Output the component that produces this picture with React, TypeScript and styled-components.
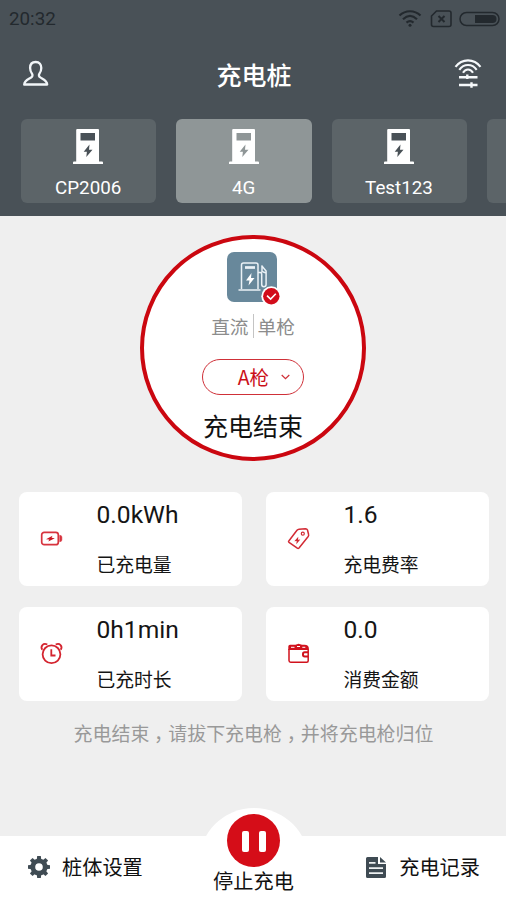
import { Fragment } from "react";
import styled, { createGlobalStyle } from "styled-components";

const GlobalStyle = createGlobalStyle`
* {
  box-sizing: border-box;
}
body {
  margin: 0;
  background-color: #efefef;
  font-family: Roboto, "Noto Sans CJK SC", sans-serif;
}
`;

const Screen = styled.div`
  display: flex;
  flex-direction: column;
  width: 506px;
  height: 900px;
  overflow: hidden;
  background-color: #efefef;
`;

const Header = styled.header`
  height: 216px;
  flex-shrink: 0;
  background-color: #495157;
  color: white;
`;

const StatusBar = styled.div`
  display: flex;
  justify-content: space-between;
  align-items: center;
  height: 36px;
  padding: 1px 6px 0 9px;
  font-size: 18.8px;
  color: #23292e;
  svg {
    display: block;
  }
`;

const TitleBar = styled.div`
  display: flex;
  justify-content: space-between;
  align-items: center;
  height: 76px;
  padding: 0 24px 0 22px;
  svg {
    display: block;
  }
`;

const Title = styled.h1`
  margin: 0;
  padding: 5px 0 0 4px;
  font-size: 25px;
  line-height: 36px;
  font-weight: 500;
`;

const Piles = styled.div`
  display: flex;
  gap: 20px;
  padding: 7px 0 0 21px;
  overflow: hidden;
`;

const Pile = styled.div<{ $active?: boolean }>`
  display: flex;
  flex-direction: column;
  align-items: center;
  flex: 0 0 135.4px;
  height: 84px;
  padding-top: 10px;
  border-radius: 6px;
  background-color: ${(p) => (p.$active ? "#8f9697" : "#5c6468")};
  color: ${(p) => (p.$active ? "#8f9697" : "#495157")};
  svg {
    margin-right: 1px;
  }
`;

const PileName = styled.span`
  margin-top: 12px;
  padding-right: 1px;
  font-size: 18.8px;
  line-height: 25px;
  color: white;
`;

const Main = styled.main`
  flex: 1;
  display: flex;
  flex-direction: column;
  align-items: center;
  padding-top: 19px;
`;

const Dial = styled.section`
  display: flex;
  flex-direction: column;
  align-items: center;
  width: 226px;
  height: 226px;
  padding-top: 13px;
  border: 4px solid #cb0710;
  border-radius: 50%;
  background-color: white;
  > svg {
    margin-right: 2px;
    flex-shrink: 0;
  }
`;

const GunType = styled.div`
  display: flex;
  align-items: center;
  height: 28px;
  margin-top: 7px;
  padding-top: 1px;
  font-size: 18.7px;
  line-height: 26px;
  color: #8c8c8c;
`;

const Divider = styled.i`
  width: 1px;
  height: 24px;
  margin: 0 4px 3px;
  background-color: #c4c4c4;
`;

const GunSelect = styled.button`
  display: flex;
  align-items: center;
  justify-content: flex-end;
  gap: 12px;
  width: 102px;
  height: 36px;
  flex-shrink: 0;
  margin-top: 18px;
  padding: 0 13px 0 0;
  border: 1.5px solid #cf3038;
  border-radius: 18px;
  background: white;
  font-family: "Noto Sans CJK SC", sans-serif;
  font-size: 19.5px;
  line-height: 30px;
  font-weight: 400;
  color: #cb1019;
`;

const DialState = styled.strong`
  margin-top: 14px;
  font-size: 25px;
  line-height: 38px;
  font-weight: 400;
  color: #111;
`;

const Stats = styled.section`
  display: grid;
  grid-template-columns: 223px 223px;
  grid-auto-rows: 94px;
  gap: 21px 24px;
  margin: 31px 0 0 1px;
`;

const Stat = styled.div`
  display: flex;
  border-radius: 8px;
  background-color: white;
  svg {
    display: block;
    margin: 34px 33px 0 20px;
    flex-shrink: 0;
  }
`;

const StatText = styled.div`
  display: flex;
  flex-direction: column;
  color: #151515;
`;

const StatValue = styled.span`
  margin-top: 7px;
  font-size: 24.6px;
  line-height: 32px;
`;

const StatLabel = styled.span`
  margin-top: 21px;
  font-size: 18.8px;
  line-height: 29px;
`;

const Hint = styled.p`
  margin: 20px 0 0 1px;
  font-size: 18.95px;
  line-height: 28px;
  color: #999;
  white-space: nowrap;
`;

// half-width comma centred in a full-width cell
const Comma = styled.span`
  padding: 0 0.25em;
  font-family: "Noto Sans CJK SC", sans-serif;
  font-feature-settings: "halt";
  line-height: 1;
`;

const Footer = styled.footer`
  position: relative;
  display: flex;
  justify-content: space-between;
  align-items: center;
  flex-shrink: 0;
  height: 64px;
  padding: 0 26px 0 27px;
  background-color: white;
`;

const FooterItem = styled.div`
  display: flex;
  align-items: center;
  gap: 11px;
  font-size: 20.2px;
  line-height: 30px;
  color: #111;
  svg {
    display: block;
    margin-bottom: 2px;
  }
`;

const Stop = styled.div`
  position: absolute;
  left: 50%;
  top: -28px;
  display: flex;
  flex-direction: column;
  align-items: center;
  width: 110px;
  height: 92px;
  padding-top: 6px;
  margin-left: -54.5px;
  border-radius: 55px 55px 0 0;
  background-color: white;
  font-size: 20.2px;
  line-height: 30px;
  color: #111;
`;

const StopButton = styled.button`
  display: flex;
  justify-content: center;
  align-items: center;
  gap: 10px;
  width: 53px;
  height: 53px;
  padding: 2px 0 0;
  border: none;
  border-radius: 50%;
  background-color: #d50d18;
`;

const PauseBar = styled.i`
  width: 7px;
  height: 21px;
  border-radius: 2px;
  background-color: white;
`;

const StatusIcons = () => (
  <svg width="102" height="20" viewBox="0 0 102 20" fill="none" stroke="#23292e">
    <path d="M1.5 6.5C7.5.8 16.5.8 22.5 6.5" strokeWidth="2.2" />
    <path d="M5 10.2C9.5 6 14.5 6 19 10.2" strokeWidth="2.2" />
    <path d="M8.5 13.6C10.8 11.6 13.2 11.6 15.5 13.6" strokeWidth="2.2" />
    <circle cx="12" cy="16.2" r="1.5" fill="#23292e" stroke="none" />
    <path d="M38.5 2H51q2 0 2 2v11.500q0 2-2 2H35.500q-2 0-2-2V7z" strokeWidth="1.600" />
    <path d="M40.500 7l6 6M46.500 7l-6 6" strokeWidth="2" />
    <rect x="62" y="3.500" width="39" height="13" rx="6.500" strokeWidth="1.500" />
    <path d="M77 6h17.500a4 4 0 0 1 0 8H77z" fill="#23292e" stroke="none" />
  </svg>
);

const UserIcon = () => (
  <svg width="28" height="28" viewBox="0 0 28 28" fill="none" stroke="#f1f5f8" strokeWidth="2.300" strokeLinejoin="round">
    <path d="M13.700 2c-3.800 0-5.600 2.500-5.600 5.900 0 3 .9 4.400 2 6 .8 1.300.3 2.700-1 3.500-2.800 1.800-6.700 3-6.900 7.100h23c-.2-4.100-4.100-5.300-6.900-7.100-1.300-.8-1.800-2.200-1-3.500 1.100-1.600 2-3 2-6 0-3.400-1.800-5.900-5.600-5.900z" />
  </svg>
);

const WifiSettingIcon = () => (
  <svg width="28" height="30" viewBox="0 0 28 30" fill="none" stroke="#f6f9fb" strokeWidth="2.100">
    <path d="M1.500 7.800C8-.8 20-.8 26.500 7.800" />
    <path d="M5.300 10.800C9.800 4.400 18.200 4.400 22.700 10.800" />
    <path d="M9 13.800C11.500 9.400 16.500 9.400 19 13.800" />
    <path d="M5 18.200h18.500M5 26h18.500" strokeWidth="2.600" />
    <path d="M13.300 15.500v4.500M17.500 23.200v5.600" strokeWidth="2.400" />
  </svg>
);

const PileIcon = () => (
  <svg width="30" height="35" viewBox="0 0 30 35">
    <path d="M3.200 1q0-1 1-1H25q1 0 1 1v31.500h3q1 0 1 1V35H0v-1.500q0-1 1-1h2.200z" fill="white" />
    <path d="M7.500 4H22v7.500H7.500zM16.500 15.500l-5.800 7.300h3.200l-.6 5.200 6.200-7.300H16z" fill="currentColor" />
  </svg>
);

// the charger with the red "selected" mark on its corner
const ChargerIcon = () => (
  <svg width="50" height="54" viewBox="0 0 50 54" overflow="visible">
    <rect width="50" height="50" rx="7" fill="#68889b" />
    <g fill="none" stroke="#eaf1f6" strokeWidth="1.500">
      <path d="M14.500 37V13q0-2 2-2H29q2 0 2 2v24M11.500 38h22" />
      <path d="M18 15.500h10" strokeWidth="2.700" />
      <path d="M31 20.500h2.200q1.500 0 1.500 1.500v10.500q0 2.200 2.200 2.200t2.200-2.200V19L34.500 13.500M35 14v5.500l4 1.500" />
    </g>
    <path d="M24.500 21l-5.500 7.500h3.500L21.500 33.500l6-7.500H24z" fill="white" />
    <circle cx="44.300" cy="44.300" r="10" fill="white" />
    <circle cx="44.300" cy="44.300" r="8.200" fill="#d20c1a" />
    <path d="M40 43.700l3.600 3.400 5.200-5.300" fill="none" stroke="white" strokeWidth="1.600" />
  </svg>
);

const BatteryIcon = () => (
  <svg width="25" height="25" viewBox="0 0 25 25" fill="none" stroke="#d7333e">
    <rect x="2.700" y="6.300" width="16.600" height="12.400" rx="2.500" strokeWidth="1.700" />
    <path d="M20.700 9.200q2.200.3 2.200 1.800v3q0 1.500-2.200 1.800z" fill="#d7333e" strokeWidth=".5" />
    <path d="M13.500 9.800L7 13.200l3.300.3-1 1.900 6.500-3.200-3.200-.4z" fill="#cb1620" stroke="none" />
  </svg>
);

const TagIcon = () => (
  <svg width="25" height="25" viewBox="0 0 25 25" fill="none" stroke="#d22a34" strokeWidth="1.500" strokeLinejoin="round">
    <path d="M2.800 15L11 4.300q.8-1 2-1.100l6.500-.5q1.500 0 2 1.300l1.100 4.500q.3 1-.4 2L13 22q-.8.800-1.700.2L3 16.300q-.8-.6-.2-1.300z" />
    <circle cx="16.800" cy="7.700" r="1.500" strokeWidth="1.200" />
    <path d="M12.300 10.800L8.300 15.200l2.400-.1-.4 3.200 4-4.700-2.300.1z" fill="#d22a34" stroke="none" />
  </svg>
);

const ClockIcon = () => (
  <svg width="25" height="25" viewBox="0 0 25 25" fill="none" stroke="#d4242f" strokeWidth="1.800">
    <circle cx="12.500" cy="13.300" r="8.900" />
    <path d="M3.300 8.700C1 5.200 4.300 1.500 8.300 3.500M21.700 8.700c2.300-3.500-1-7.200-5-5.200M12.300 8.300v6.200h4.200" />
  </svg>
);

const WalletIcon = () => (
  <svg width="25" height="25" viewBox="0 0 25 25" fill="none" stroke="#d1121d" strokeWidth="1.500">
    <path d="M3 8v11.500q0 1.700 1.700 1.700h16q1.500 0 1.500-1.500V8.500" />
    <path d="M2.300 9V5.500q0-1.800 1.700-1.800h5.500l3-1L16 3.700h2.500q4.400 0 4.400 4V9z" fill="#d1121d" stroke="none" />
    <path d="M5 6.300h3.500M11 5.500h3M16.300 6.300h3" stroke="white" strokeWidth="1" />
    <path d="M22 11.300h-3.300q-1.700 0-1.700 1.700v.8q0 1.700 1.700 1.700H22" strokeWidth="2" />
  </svg>
);

const teeth = [0, 45, 90, 135, 180, 225, 270, 315];

const GearIcon = () => (
  <svg width="24" height="24" viewBox="0 0 24 24">
    {teeth.map((a) => (
      <path key={a} d="M9.700 5L10.200 1h3.600l.5 4z" fill="#3f4b53" transform={`rotate(${a} 12 12)`} />
    ))}
    <circle cx="12" cy="12" r="6.200" fill="none" stroke="#3f4b53" strokeWidth="4.800" />
  </svg>
);

const RecordIcon = () => (
  <svg width="24" height="24" viewBox="0 0 24 24">
    <path d="M2 3.500Q2 2 3.500 2H14v7h8v12.500q0 1.500-1.500 1.500h-17Q2 23 2 21.500zM16 2L22 7.500h-6z" fill="#3f4b53" />
    <path d="M5 7.800h6.500M5 13.200h14M5 18.200h14" stroke="#eef1f2" strokeWidth="1.700" />
  </svg>
);

const piles = ["CP2006", "4G", "Test123", ""];

const stats = [
  { value: "0.0kWh", label: "已充电量", icon: <BatteryIcon /> },
  { value: "1.6", label: "充电费率", icon: <TagIcon /> },
  { value: "0h1min", label: "已充时长", icon: <ClockIcon /> },
  { value: "0.0", label: "消费金额", icon: <WalletIcon /> },
];

const hint = ["充电结束", "请拔下充电枪", "并将充电枪归位"];

export default function App() {
  return (
    <Screen>
      <GlobalStyle />
      <Header>
        <StatusBar>
          <span>20:32</span>
          <StatusIcons />
        </StatusBar>
        <TitleBar>
          <UserIcon />
          <Title>充电桩</Title>
          <WifiSettingIcon />
        </TitleBar>
        <Piles>
          {piles.map((name) => (
            <Pile key={name} $active={name === "4G"}>
              {name && <PileIcon />}
              <PileName>{name}</PileName>
            </Pile>
          ))}
        </Piles>
      </Header>
      <Main>
        <Dial>
          <ChargerIcon />
          <GunType>
            直流
            <Divider />
            单枪
          </GunType>
          <GunSelect>
            A枪
            <svg width="9" height="6" viewBox="0 0 9 6" fill="none" stroke="#cf3038" strokeWidth="1.200">
              <path d="M.7 1l3.800 3.700L8.300 1" />
            </svg>
          </GunSelect>
          <DialState>充电结束</DialState>
        </Dial>
        <Stats>
          {stats.map((s) => (
            <Stat key={s.label}>
              {s.icon}
              <StatText>
                <StatValue>{s.value}</StatValue>
                <StatLabel>{s.label}</StatLabel>
              </StatText>
            </Stat>
          ))}
        </Stats>
        <Hint>
          {hint.map((part, i) => (
            <Fragment key={part}>
              {i > 0 && <Comma>，</Comma>}
              {part}
            </Fragment>
          ))}
        </Hint>
      </Main>
      <Footer>
        <FooterItem>
          <GearIcon />
          桩体设置
        </FooterItem>
        <FooterItem>
          <RecordIcon />
          充电记录
        </FooterItem>
        <Stop>
          <StopButton>
            <PauseBar />
            <PauseBar />
          </StopButton>
          停止充电
        </Stop>
      </Footer>
    </Screen>
  );
}
